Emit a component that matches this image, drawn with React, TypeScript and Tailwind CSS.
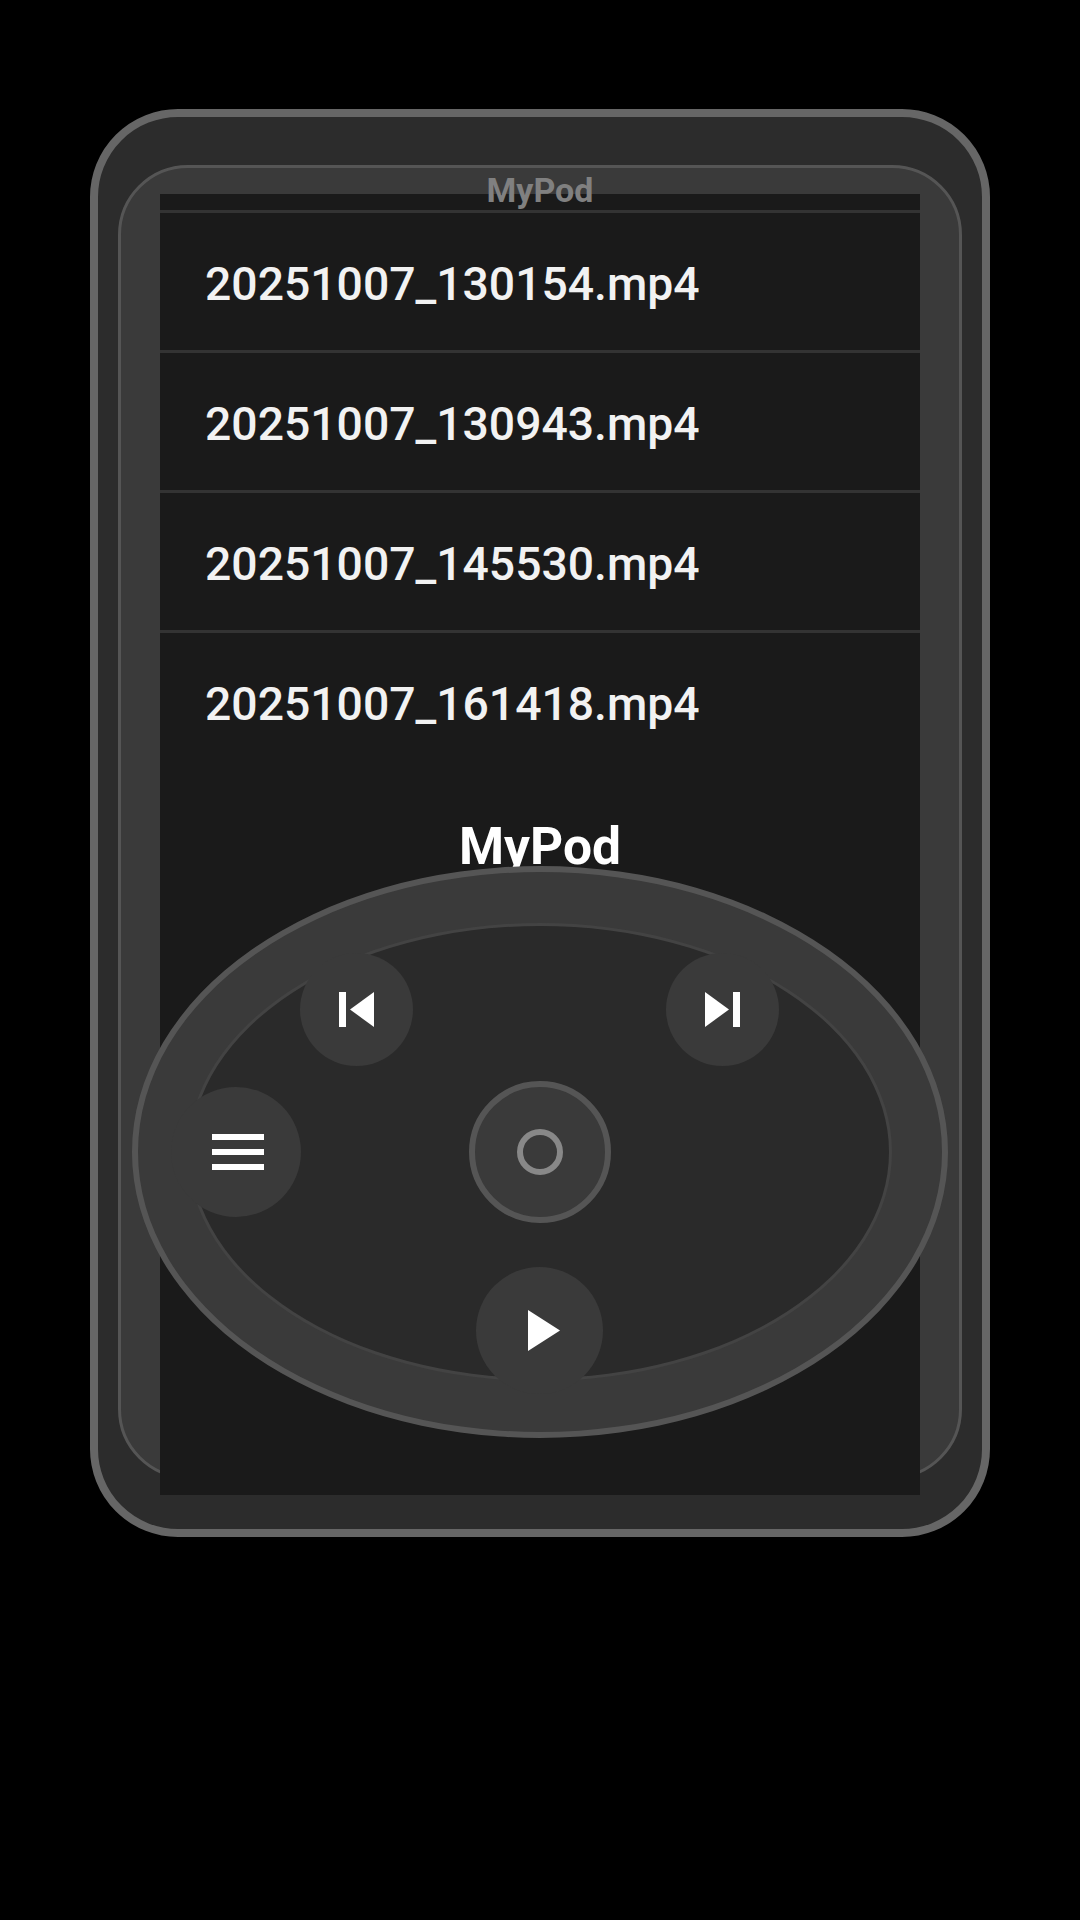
const files = [
  "20251007_130154.mp4",
  "20251007_130943.mp4",
  "20251007_145530.mp4",
  "20251007_161418.mp4",
];

function PrevIcon() {
  return (
    <svg width="35" height="35" viewBox="0 0 35 35" fill="#ffffff">
      <rect x="0" y="0" width="7" height="35" />
      <polygon points="35,0 35,35 11,17.5" />
    </svg>
  );
}

function NextIcon() {
  return (
    <svg width="35" height="35" viewBox="0 0 35 35" fill="#ffffff">
      <polygon points="0,0 0,35 24,17.5" />
      <rect x="28" y="0" width="7" height="35" />
    </svg>
  );
}

function MenuIcon() {
  return (
    <svg width="52" height="36" viewBox="0 0 52 36" fill="#ffffff">
      <rect x="0" y="0" width="52" height="6" />
      <rect x="0" y="15" width="52" height="6" />
      <rect x="0" y="30" width="52" height="6" />
    </svg>
  );
}

function PlayIcon() {
  return (
    <svg width="42" height="41" viewBox="0 0 42 41" fill="#ffffff">
      <polygon points="9,0 41,20.5 9,41" />
    </svg>
  );
}

export default function App() {
  return (
    <div className="w-[1080px] h-[1920px] bg-black pt-[109px] pl-[90px] font-['Roboto',sans-serif]">
      <div className="w-[900px] h-[1428px] rounded-[88px] border-[8px] border-[#666666] bg-[#2c2c2c] pt-[48px] pl-[20px]">
        <div className="relative w-[844px] h-[1314px] rounded-[70px] border-[3px] border-[#555555] bg-[#3a3a3a] pt-[26px] pl-[39px]">
          <div className="w-[760px] h-[1301px] bg-[#1a1a1a] pt-[16px]">
            {files.map((name) => (
              <div
                key={name}
                className="h-[140px] border-t-[3px] border-[#333333] pl-[45px] pt-[7px] flex items-center text-[46.3px] font-medium text-[#f2f2f2]"
              >
                {name}
              </div>
            ))}
            <div className="relative mt-[47px]">
              <div className="text-center text-[51.5px] leading-[60px] font-bold text-white">MyPod</div>
              <div className="absolute left-[-28px] top-[49px] w-[816px] h-[572px] rounded-[50%] border-[6px] border-[#555555] bg-[#3a3a3a] flex items-center justify-center">
                <div className="w-[704px] h-[458px] rounded-[50%] border-[3px] border-[#434343] bg-[#2a2a2a] flex items-center justify-center">
                  <div className="w-[142px] h-[142px] rounded-full border-[6px] border-[#555555] bg-[#3a3a3a] flex items-center justify-center">
                    <div className="w-[46px] h-[46px] rounded-full border-[6px] border-[#888888]" />
                  </div>
                </div>
                <div className="absolute left-[162px] top-[81px] w-[113px] h-[113px] rounded-full bg-[#3a3a3a] flex items-center justify-center">
                  <PrevIcon />
                </div>
                <div className="absolute left-[528px] top-[81px] w-[113px] h-[113px] rounded-full bg-[#3a3a3a] flex items-center justify-center">
                  <NextIcon />
                </div>
                <div className="absolute left-[33px] top-[215px] w-[130px] h-[130px] rounded-full bg-[#3a3a3a] flex items-center justify-center pl-[4px]">
                  <MenuIcon />
                </div>
                <div className="absolute left-[338px] top-[395px] w-[127px] h-[127px] rounded-full bg-[#3a3a3a] flex items-center justify-center">
                  <PlayIcon />
                </div>
              </div>
            </div>
          </div>
          <div className="absolute left-0 right-0 top-[2px] text-center text-[34px] leading-[40px] font-bold text-[#808080]">
            MyPod
          </div>
        </div>
      </div>
    </div>
  );
}
